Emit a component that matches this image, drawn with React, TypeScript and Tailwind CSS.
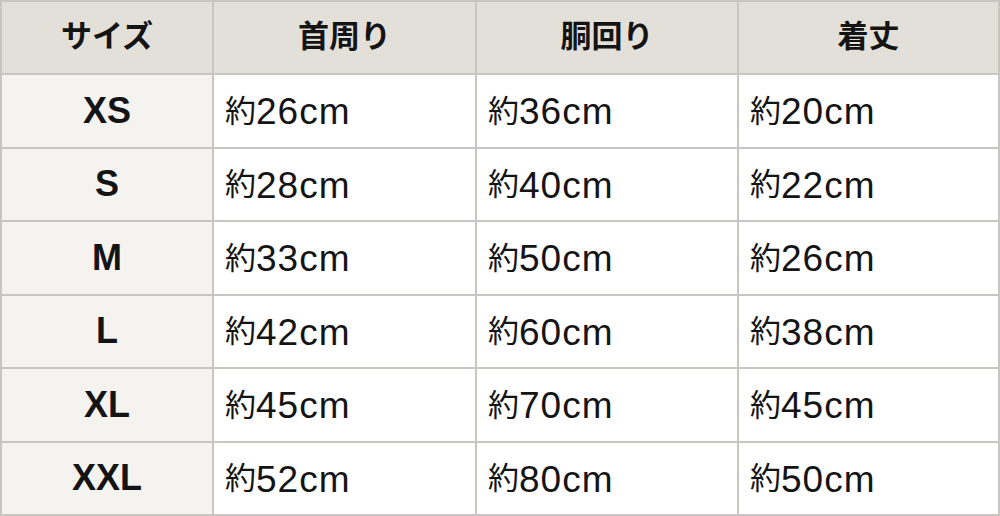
import { Fragment } from "react";

const headers = ["サイズ", "首周り", "胴回り", "着丈"];

const rows: [string, string, string, string][] = [
  ["XS", "26cm", "36cm", "20cm"],
  ["S", "28cm", "40cm", "22cm"],
  ["M", "33cm", "50cm", "26cm"],
  ["L", "42cm", "60cm", "38cm"],
  ["XL", "45cm", "70cm", "45cm"],
  ["XXL", "52cm", "80cm", "50cm"],
];

const font = "font-['Liberation_Sans','Noto_Sans_CJK_JP',sans-serif]";

export default function App() {
  return (
    <div
      className={`grid h-[516px] w-[1000px] grid-cols-[210px_261px_260px_1fr] grid-rows-[71px_repeat(6,1fr)] gap-[2px] bg-[#c9c6c1] p-[2px] text-[#141414] ${font}`}
    >
      {headers.map((h) => (
        <div
          key={h}
          className="flex items-center justify-center bg-[#e3dfd9] text-[31px] font-bold"
        >
          {h}
        </div>
      ))}
      {rows.map((r) => (
        <Fragment key={r[0]}>
          <div className="flex items-center justify-center bg-[#f5f3ef] text-[36px] font-bold">
            {r[0]}
          </div>
          {r.slice(1).map((v, i) => (
            <div
              key={i}
              className="flex items-center bg-white pl-[11px] pt-[2px]"
            >
              <span className="text-[31px]">約</span>
              <span className="text-[37px] tracking-[1px]">{v}</span>
            </div>
          ))}
        </Fragment>
      ))}
    </div>
  );
}
